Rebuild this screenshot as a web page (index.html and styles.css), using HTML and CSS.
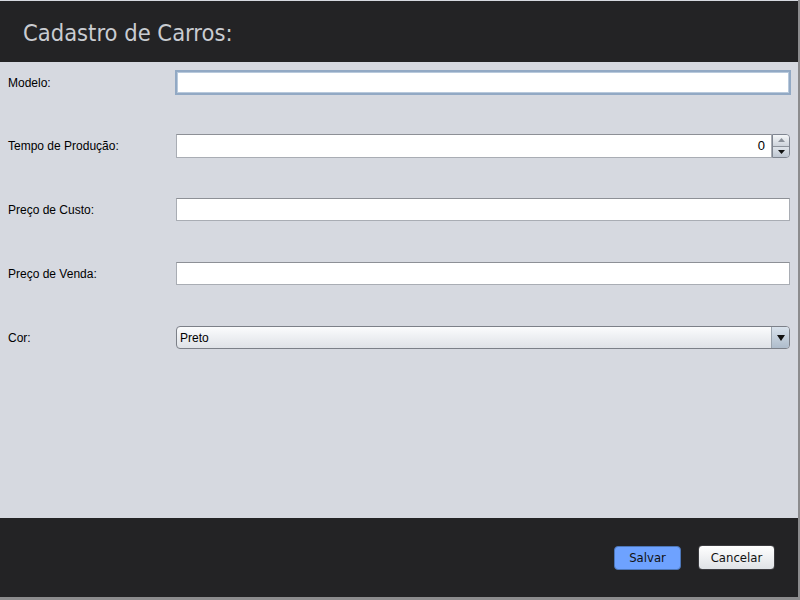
FILE: index.html
```html
<!DOCTYPE html>
<html>
<head>
<meta charset="utf-8">
<link rel="stylesheet" href="styles.css">
</head>
<body>
<div class="window">
  <header class="header"><h1 class="title">Cadastro de Carros:</h1></header>
  <main class="form">
    <div class="row">
      <label class="label">Modelo:</label>
      <div class="field focused"></div>
    </div>
    <div class="row">
      <label class="label">Tempo de Produção:</label>
      <div class="spinner">
        <div class="field num">0</div>
        <div class="spin-btns">
          <div class="spin up"><svg width="7" height="4" viewBox="0 0 7 4"><path d="M0 4 L3.5 0 L7 4Z" fill="#8a9099"/></svg></div>
          <div class="spin down"><svg width="7" height="4" viewBox="0 0 7 4"><path d="M0 0 L3.5 4 L7 0Z" fill="#111"/></svg></div>
        </div>
      </div>
    </div>
    <div class="row">
      <label class="label">Preço de Custo:</label>
      <div class="field"></div>
    </div>
    <div class="row">
      <label class="label">Preço de Venda:</label>
      <div class="field"></div>
    </div>
    <div class="row">
      <label class="label">Cor:</label>
      <div class="combo">
        <span class="combo-text">Preto</span>
        <div class="combo-btn"><svg width="8" height="6" viewBox="0 0 8 6"><path d="M0 0 L4 6 L8 0Z" fill="#111"/></svg></div>
      </div>
    </div>
  </main>
  <footer class="footer">
    <button class="btn primary">Salvar</button>
    <button class="btn secondary">Cancelar</button>
  </footer>
</div>
</body>
</html>
```
FILE: styles.css
```css
html, body { margin: 0; padding: 0; background: #8c8c8e; }
.window {
  width: 798px;
  height: 597px;
  display: flex;
  flex-direction: column;
  background: #d6d9e0;
}
.header {
  height: 61px;
  margin-top: 1px;
  background: #232325;
  display: flex;
  align-items: center;
  padding-left: 23px;
  padding-top: 2px;
  box-sizing: border-box;
}
.title {
  margin: 0;
  font-family: "DejaVu Sans Condensed", "DejaVu Sans", sans-serif;
  font-weight: normal;
  font-size: 23.5px;
  color: #c9ccd1;
}
.form {
  flex: 1;
  padding-top: 8px;
  display: flex;
  flex-direction: column;
  gap: 40px;
}
.row {
  display: flex;
  align-items: flex-start;
  height: 24px;
}
.label {
  width: 168px;
  padding-left: 8px;
  line-height: 24px;
  font-family: "Liberation Sans", Arial, sans-serif;
  font-size: 12px;
  color: #000;
}
.row:first-child .label { line-height: 26px; }
.field {
  width: 614px;
  height: 23px;
  background: #fff;
  border: 1px solid #a9adb4;
  border-top-color: #8d9096;
  box-sizing: border-box;
  font-family: "Liberation Sans", Arial, sans-serif;
  font-size: 12px;
}
.field.focused {
  width: 616px;
  height: 25px;
  border: 2px solid #92a9c4;
  box-shadow: inset 0 0 0 1px #b8c9dc;
  margin-left: -1px;
}
.spinner { display: flex; width: 614px; height: 24px; }
.field.num {
  width: 596px;
  height: 24px;
  text-align: right;
  padding-right: 6px;
  line-height: 22px;
  font-size: 13px;
}
.spin-btns {
  width: 18px;
  display: flex;
  flex-direction: column;
  border: 1px solid #7f8590;
  border-radius: 0 4px 4px 0;
  overflow: hidden;
  box-sizing: border-box;
  height: 24px;
}
.spin {
  flex: 1;
  display: flex;
  align-items: center;
  justify-content: center;
  background: linear-gradient(#f4f6f8, #cdd3db);
}
.spin.up { border-bottom: 1px solid #8d939c; }
.spin.down { background: linear-gradient(#dfe4ea, #bfc7d2); }
.combo {
  width: 614px;
  height: 23px;
  box-sizing: border-box;
  border: 1px solid #7c8088;
  border-radius: 4px;
  background: linear-gradient(#fbfcfd 0%, #eef0f3 45%, #dfe2e7 100%);
  display: flex;
  align-items: center;
  justify-content: space-between;
  overflow: hidden;
}
.combo-text {
  padding-left: 3px;
  font-family: "Liberation Sans", Arial, sans-serif;
  font-size: 12px;
  color: #000;
}
.combo-btn {
  width: 17px;
  height: 100%;
  border-left: 1px solid #9aa3ad;
  background: linear-gradient(#d9e2ec, #aebccb);
  display: flex;
  align-items: center;
  justify-content: center;
}
.footer {
  height: 79px;
  background: #232325;
  display: flex;
  justify-content: flex-end;
  align-items: center;
  gap: 17px;
  padding-right: 23px;
  box-sizing: border-box;
}
.btn {
  font-family: "DejaVu Sans Condensed", "DejaVu Sans", sans-serif;
  font-size: 13px;
  height: 25px;
  padding: 0;
  border-radius: 4px;
  border: 1px solid #3c3c40;
  background: linear-gradient(#ffffff, #dfe2e6);
  color: #111;
}
.btn.primary {
  width: 67px;
  height: 24px;
  background: #6ea2ff;
  border-color: #4c76b8;
}
.btn.secondary { width: 77px; }
```
